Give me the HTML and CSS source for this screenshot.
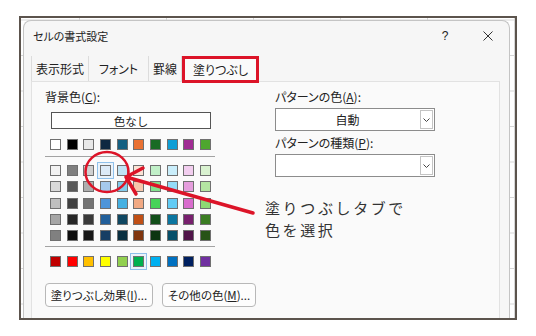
FILE: index.html
```html
<!DOCTYPE html>
<html lang="ja">
<head>
    <meta charset="UTF-8">
    <meta name="viewport" content="width=device-width, initial-scale=1.0">
    <title>セルの書式設定</title>
    <link rel="stylesheet" href="styles.css">
</head>
<body>
<div class="page">
    <div class="shot">
        <div class="dialog">
            <div class="titlebar">
                <span class="title">セルの書式設定</span>
                <span class="help">?</span>
                <svg class="close" width="10" height="10" viewBox="0 0 10 10"><path d="M0.5 0.5L9.5 9.5M9.5 0.5L0.5 9.5" stroke="#333" stroke-width="1" fill="none"/></svg>
            </div>

            <div class="tabs">
                <div class="tab t1">表示形式</div>
                <div class="tab t2">フォント</div>
                <div class="tab t3">罫線</div>
                <div class="tab active">塗りつぶし</div>
            </div>

            <div class="panel">
                <div class="left">
                    <div class="label">背景色(<u>C</u>):</div>
                    <div class="nocolor">色なし</div>

                    <!-- テーマの色 -->
                    <div class="swatches first">
                        <span class="sw" style="background:#ffffff"></span>
                        <span class="sw" style="background:#000000"></span>
                        <span class="sw" style="background:#e8e8e8"></span>
                        <span class="sw" style="background:#0e2841"></span>
                        <span class="sw" style="background:#156082"></span>
                        <span class="sw" style="background:#e97132"></span>
                        <span class="sw" style="background:#196b24"></span>
                        <span class="sw" style="background:#0f9ed5"></span>
                        <span class="sw" style="background:#a02b93"></span>
                        <span class="sw" style="background:#4ea72e"></span>
                    </div>
                    <div class="sep"></div>
                    <div class="swatches shades">
                        <span class="sw" style="background:#f2f2f2"></span>
                        <span class="sw" style="background:#7f7f7f"></span>
                        <span class="sw" style="background:#d0d0d0"></span>
                        <span class="sw sel" style="background:#dceaf7"></span>
                        <span class="sw" style="background:#c0e4f5"></span>
                        <span class="sw" style="background:#fbe2d5"></span>
                        <span class="sw" style="background:#c1f0c8"></span>
                        <span class="sw" style="background:#caeefb"></span>
                        <span class="sw" style="background:#f2ceef"></span>
                        <span class="sw" style="background:#d9f2d0"></span>

                        <span class="sw" style="background:#d9d9d9"></span>
                        <span class="sw" style="background:#595959"></span>
                        <span class="sw" style="background:#aeaeae"></span>
                        <span class="sw" style="background:#a6c9ec"></span>
                        <span class="sw" style="background:#83cbeb"></span>
                        <span class="sw" style="background:#f7c7ac"></span>
                        <span class="sw" style="background:#83e28e"></span>
                        <span class="sw" style="background:#94dcf8"></span>
                        <span class="sw" style="background:#e59edd"></span>
                        <span class="sw" style="background:#b4e5a2"></span>

                        <span class="sw" style="background:#bfbfbf"></span>
                        <span class="sw" style="background:#404040"></span>
                        <span class="sw" style="background:#747474"></span>
                        <span class="sw" style="background:#4e95d9"></span>
                        <span class="sw" style="background:#45b0e1"></span>
                        <span class="sw" style="background:#f1a983"></span>
                        <span class="sw" style="background:#47d359"></span>
                        <span class="sw" style="background:#61cbf4"></span>
                        <span class="sw" style="background:#d86dcd"></span>
                        <span class="sw" style="background:#8ed973"></span>

                        <span class="sw" style="background:#a6a6a6"></span>
                        <span class="sw" style="background:#262626"></span>
                        <span class="sw" style="background:#3a3a3a"></span>
                        <span class="sw" style="background:#215f9a"></span>
                        <span class="sw" style="background:#0f4761"></span>
                        <span class="sw" style="background:#c04f15"></span>
                        <span class="sw" style="background:#124f1a"></span>
                        <span class="sw" style="background:#0b76a0"></span>
                        <span class="sw" style="background:#78206e"></span>
                        <span class="sw" style="background:#3b7d23"></span>

                        <span class="sw" style="background:#808080"></span>
                        <span class="sw" style="background:#0d0d0d"></span>
                        <span class="sw" style="background:#171717"></span>
                        <span class="sw" style="background:#163e64"></span>
                        <span class="sw" style="background:#0a2f40"></span>
                        <span class="sw" style="background:#80350e"></span>
                        <span class="sw" style="background:#0c3511"></span>
                        <span class="sw" style="background:#064f6a"></span>
                        <span class="sw" style="background:#501549"></span>
                        <span class="sw" style="background:#275317"></span>
                    </div>
                    <div class="sep"></div>

                    <!-- 標準の色 -->
                    <div class="swatches std">
                        <span class="sw" style="background:#c00000"></span>
                        <span class="sw" style="background:#ff0000"></span>
                        <span class="sw" style="background:#ffc000"></span>
                        <span class="sw" style="background:#ffff00"></span>
                        <span class="sw" style="background:#92d050"></span>
                        <span class="sw sel" style="background:#00b050"></span>
                        <span class="sw" style="background:#00b0f0"></span>
                        <span class="sw" style="background:#0070c0"></span>
                        <span class="sw" style="background:#002060"></span>
                        <span class="sw" style="background:#7030a0"></span>
                    </div>

                    <div class="buttons">
                        <button class="btn b1">塗りつぶし効果(<u>I</u>)...</button>
                        <button class="btn b2">その他の色(<u>M</u>)...</button>
                    </div>
                </div>

                <div class="right">
                    <div class="label">パターンの色(<u>A</u>):</div>
                    <div class="combo">
                        <span class="value">自動</span>
                        <span class="drop"><svg width="7" height="4" viewBox="0 0 7 4"><path d="M0.5 0.5L3.5 3.5L6.5 0.5" stroke="#444" stroke-width="1" fill="none"/></svg></span>
                    </div>
                    <div class="label second">パターンの種類(<u>P</u>):</div>
                    <div class="combo">
                        <span class="value"></span>
                        <span class="drop"><svg width="7" height="4" viewBox="0 0 7 4"><path d="M0.5 0.5L3.5 3.5L6.5 0.5" stroke="#444" stroke-width="1" fill="none"/></svg></span>
                    </div>
                </div>
            </div>
        </div>
    </div>

    <!-- 赤い丸と矢印 -->
    <svg class="marks" width="536" height="336" viewBox="0 0 536 336">
        <ellipse cx="107" cy="172" rx="21.5" ry="20" fill="none" stroke="#dc1428" stroke-width="2.5"/>
        <path d="M253 213L126 177M126 177L143 168M126 177L136 194" fill="none" stroke="#dc1428" stroke-width="3.5" stroke-linecap="round"/>
    </svg>
    <div class="note">塗りつぶしタブで<br>色を選択</div>
</div>
</body>
</html>
```

FILE: styles.css
```css
body {
    margin: 0;
    background: #fff;
    font-family: "Noto Sans CJK JP", "Noto Sans", sans-serif;
    color: #222;
}

.page {
    position: relative;
    box-sizing: border-box;
    width: 536px;
    height: 336px;
    padding: 16px 0 0 19px;
    overflow: hidden;
}

/* スクリーンショットの枠 (後ろはExcelのシート) */
.shot {
    box-sizing: border-box;
    width: 498px;
    height: 304px;
    border: 2px solid #5c544d;
    overflow: hidden;
    background-color: #fff;
    background-image:
        linear-gradient(to right, #d6d6d6 1px, transparent 1px),
        linear-gradient(to bottom, #d6d6d6 1px, transparent 1px);
    background-size: 87px 100%, 100% 35.5px;
    background-position: 58px 0, 0 37px;
}

.dialog {
    box-sizing: border-box;
    width: 487px;
    height: 310px;
    margin: 2px 0 0 2px;
    border: 1px solid #c4c4c4;
    border-bottom: none;
    border-radius: 8px 8px 0 0;
    background: #f6f6f6;
    display: flex;
    flex-direction: column;
}

.titlebar {
    height: 29px;
    display: flex;
    align-items: center;
    padding-left: 9px;
    flex-shrink: 0;
}

.title {
    flex: 1;
    font-size: 11px;
    font-feature-settings: "palt";
}

.help {
    width: 20px;
    text-align: center;
    font-size: 12px;
    font-family: "Liberation Sans", sans-serif;
}

.close {
    margin: 0 16px 0 28px;
}

.tabs {
    display: flex;
    height: 25px;
    margin: 6px 0 0 7px;
    flex-shrink: 0;
}

.tab {
    box-sizing: border-box;
    height: 25px;
    display: flex;
    align-items: center;
    justify-content: center;
    font-size: 12px;
    font-feature-settings: "palt";
    border-right: 1px solid #dcdcdc;
}

.t1 {
    width: 58px;
    border-left: 1px solid #dcdcdc;
}

.t2 {
    width: 60px;
}

.t3 {
    width: 33px;
}

.tab.active {
    position: relative;
    width: 77px;
    height: 27px;
    border: 3px solid #dc1428;
    background: #fafafa;
}

.panel {
    flex: 1;
    margin: 0 9px 0 7px;
    border: 1px solid #e2e2e2;
    background: #fafafa;
    display: flex;
}

.left {
    width: 170px;
    padding: 7px 0 0 13px;
}

.label {
    height: 16px;
    line-height: 16px;
    font-size: 12px;
    font-feature-settings: "palt";
    white-space: nowrap;
}

.nocolor {
    box-sizing: border-box;
    width: 160px;
    height: 17px;
    margin: 7px 0 0 6px;
    border: 1px solid #555;
    background: #fff;
    font-size: 11.5px;
    display: flex;
    align-items: center;
    justify-content: center;
}

.swatches {
    display: grid;
    grid-template-columns: repeat(10, 11px);
    grid-auto-rows: 11px;
    column-gap: 5.67px;
    row-gap: 5.33px;
    margin-left: 5px;
}

.sw {
    box-sizing: border-box;
    border: 1px solid #707070;
}

.sw.sel {
    box-shadow: 0 0 0 2px #eaf3fb, 0 0 0 3px #8fc0ea;
}

.first {
    margin-top: 10px;
}

.sep {
    height: 1px;
    background: #a3a3a3;
    margin-top: 6px;
}

.shades {
    margin-top: 8px;
}

.shades + .sep {
    margin-top: 5px;
}

.std {
    margin-top: 9px;
}

.buttons {
    display: flex;
    gap: 9px;
    margin-top: 16px;
}

.btn {
    flex-shrink: 0;
    height: 24px;
    padding: 0;
    border: 1px solid #b8b8b8;
    border-radius: 4px;
    background: #fdfdfd;
    color: #222;
    font-family: "Noto Sans CJK JP", sans-serif;
    font-size: 11.5px;
    font-feature-settings: "palt";
    white-space: nowrap;
}

.b1 {
    width: 108px;
}

.b2 {
    width: 94px;
}

.right {
    padding: 7px 0 0 60px;
}

.combo {
    box-sizing: border-box;
    width: 160px;
    height: 23px;
    margin-top: 3px;
    border: 1px solid #8c8c8c;
    background: #fff;
    display: flex;
}

.label.second {
    margin-top: 4px;
}

.value {
    flex: 1;
    display: flex;
    align-items: center;
    justify-content: center;
    font-size: 12px;
}

.drop {
    box-sizing: border-box;
    width: 13px;
    margin: 1px;
    border: 1px solid #c4c4c4;
    display: flex;
    align-items: center;
    justify-content: center;
}

.marks {
    position: absolute;
    left: 0;
    top: 0;
}

.note {
    position: absolute;
    left: 265px;
    top: 197px;
    font-size: 15px;
    line-height: 22px;
    letter-spacing: 2.6px;
    color: #333;
    white-space: nowrap;
}
```
